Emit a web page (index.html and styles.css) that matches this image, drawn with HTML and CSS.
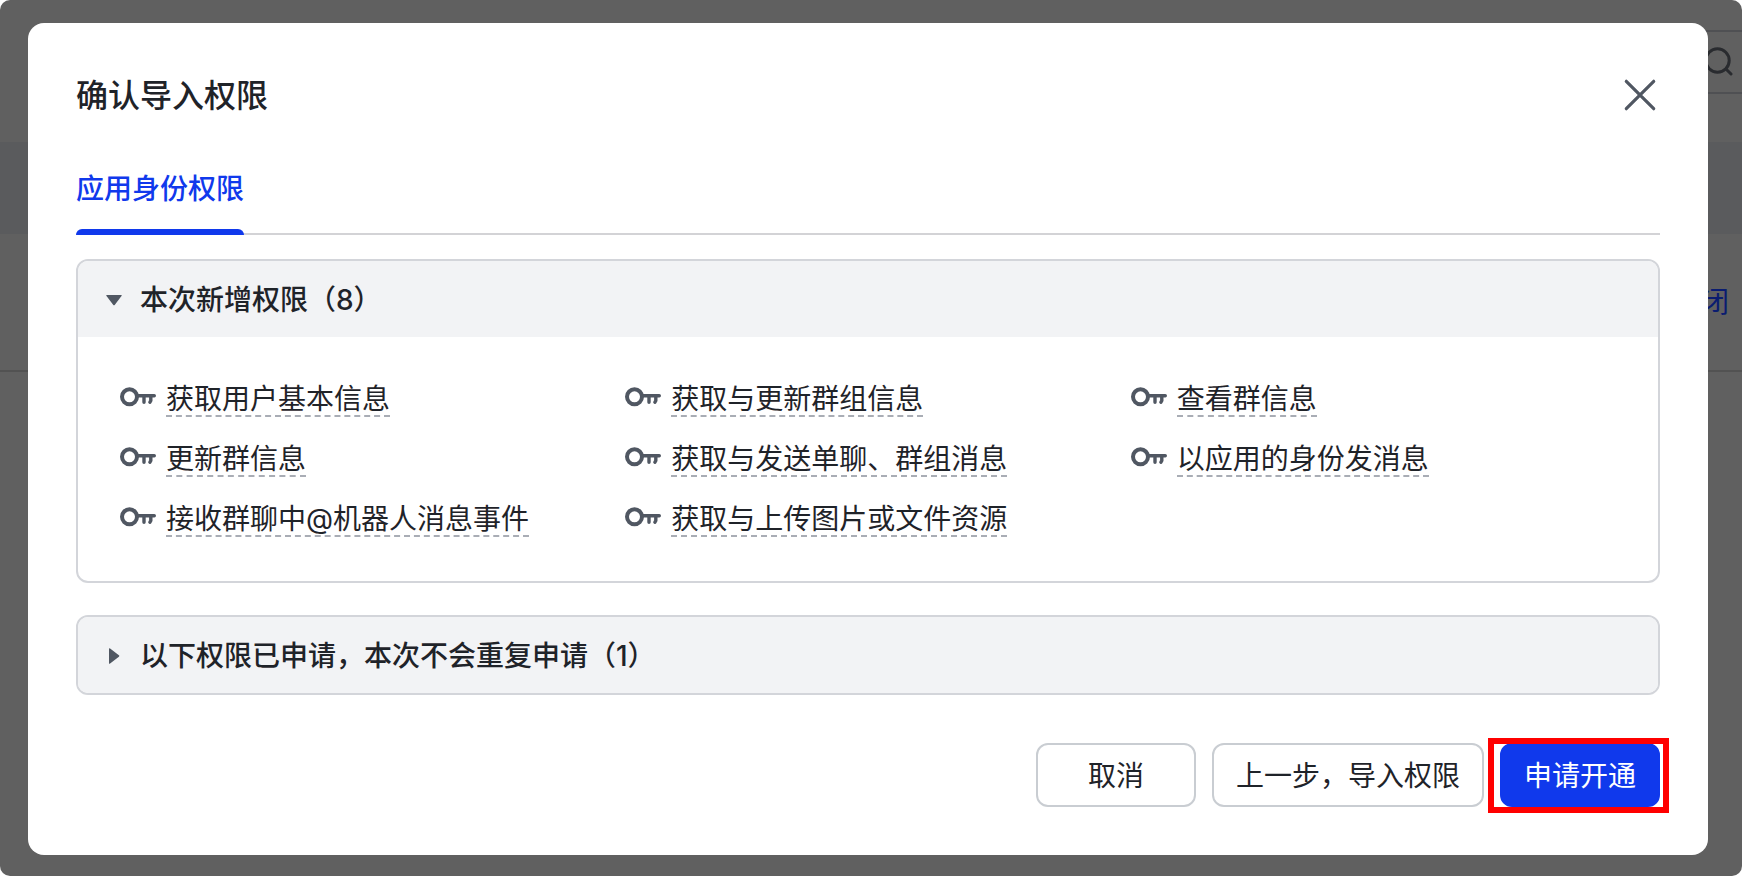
FILE: index.html
```html
<!DOCTYPE html>
<html lang="zh-CN">
<head>
  <meta charset="UTF-8">
  <title>确认导入权限</title>
  <link rel="stylesheet" href="styles.css">
</head>
<body>

<svg width="0" height="0" class="sprite" aria-hidden="true">
  <symbol id="key" viewBox="0 0 36 20">
    <circle cx="9.5" cy="9.8" r="7.5" fill="none" stroke="currentColor" stroke-width="4"/>
    <path d="M18 8.8H34.3M24 9v6.3M30.8 9v4.5l-.9 1.8" fill="none" stroke="currentColor" stroke-width="3.4" stroke-linecap="round"/>
  </symbol>
</svg>

<div class="screen">
  <!-- page behind the dialog -->
  <div class="page">
    <div class="toolbar">
      <div class="search">
        <svg width="28" height="30" viewBox="0 0 28 30" fill="none" stroke="#292b2f" stroke-width="3" stroke-linecap="round">
          <circle cx="12.5" cy="13.5" r="11.7"/>
          <path d="M21 22l5 5"/>
        </svg>
      </div>
    </div>
    <div class="table-head"></div>
    <div class="table-row"><a href="#" class="row-link">关闭</a></div>
  </div>

  <div class="modal" role="dialog" aria-labelledby="modalTitle">
    <div class="modal-header">
      <h1 id="modalTitle">确认导入权限</h1>
      <button type="button" class="close" aria-label="关闭">
        <svg width="32" height="32" viewBox="0 0 32 32" fill="none" stroke="currentColor" stroke-width="3.2" stroke-linecap="round">
          <path d="M2.3 2.3l27.4 27.4M29.7 2.3L2.3 29.7"/>
        </svg>
      </button>
    </div>

    <div class="tabs">
      <button type="button" class="tab active">应用身份权限</button>
    </div>

    <div class="panel">
      <button type="button" class="panel-header" aria-expanded="true">
        <svg class="arrow" width="16" height="16" viewBox="0 0 16 16"><path d="M.8 3h14.4q1 .2.3 1.1L8.7 12.9q-.7.8-1.4 0L.5 4.1Q-.2 3.2.8 3z"/></svg>
        <span>本次新增权限（8）</span>
      </button>
      <ul class="scopes">
        <li><svg class="key"><use href="#key"/></svg><span>获取用户基本信息</span></li>
        <li><svg class="key"><use href="#key"/></svg><span>获取与更新群组信息</span></li>
        <li><svg class="key"><use href="#key"/></svg><span>查看群信息</span></li>
        <li><svg class="key"><use href="#key"/></svg><span>更新群信息</span></li>
        <li><svg class="key"><use href="#key"/></svg><span>获取与发送单聊、群组消息</span></li>
        <li><svg class="key"><use href="#key"/></svg><span>以应用的身份发消息</span></li>
        <li><svg class="key"><use href="#key"/></svg><span>接收群聊中@机器人消息事件</span></li>
        <li><svg class="key"><use href="#key"/></svg><span>获取与上传图片或文件资源</span></li>
      </ul>
    </div>

    <div class="panel">
      <button type="button" class="panel-header" aria-expanded="false">
        <svg class="arrow" width="16" height="16" viewBox="0 0 16 16"><path d="M3 .8q.2-1 1.1-.3l8.8 6.8q.8.7 0 1.4l-8.8 6.8q-.9.7-1.1-.3z"/></svg>
        <span>以下权限已申请，本次不会重复申请（1）</span>
      </button>
    </div>

    <div class="modal-footer">
      <button type="button" class="btn">取消</button>
      <button type="button" class="btn">上一步，导入权限</button>
      <button type="button" class="btn btn-primary">申请开通</button>
    </div>
  </div>
</div>

</body>
</html>
```

FILE: styles.css
```css
* {
  box-sizing: border-box;
}
body {
  margin: 0;
  background: #fff;
  color: #1f2329;
  font-family: Inter, "Noto Sans CJK SC", sans-serif;
  font-size: 28px;
  line-height: 40px;
}
button {
  font: inherit;
  color: inherit;
  cursor: pointer;
}
.sprite {
  position: absolute;
}
.screen {
  position: relative;
  min-height: 100vh;
  padding: 23px 34px 21px 28px;
  border-radius: 10px;
  background: #606060;
  overflow: hidden;
}

/* background page */
.page {
  position: absolute;
  top: 0;
  left: 0;
  right: 0;
}
.toolbar {
  display: flex;
  justify-content: flex-end;
  height: 142px;
  padding-top: 30px;
}
.search {
  display: flex;
  justify-content: flex-end;
  width: 400px;
  height: 64px;
  padding: 15px 9px 0 0;
  border-top: 2px solid #4f5053;
  border-bottom: 2px solid #4f5053;
}
.table-head {
  height: 92px;
  background: #5a5b5d;
}
.table-row {
  height: 138px;
  padding: 48px 13px 0 0;
  border-bottom: 2px solid #525252;
  text-align: right;
}
.row-link {
  color: #0a1c70;
  text-decoration: none;
}

/* dialog */
.modal {
  position: relative;
  min-height: calc(100vh - 44px);
  padding: 48px;
  border-radius: 16px;
  background: #fff;
}
.modal-header {
  display: flex;
  align-items: center;
  justify-content: space-between;
  height: 48px;
}
h1 {
  margin: 0;
  padding-top: 2px;
  font-size: 32px;
  line-height: 48px;
  font-weight: 500;
}
.close {
  display: flex;
  padding: 4px;
  border: none;
  background: none;
  color: #505762;
}
.tabs {
  display: flex;
  height: 84px;
  margin-top: 32px;
  box-shadow: inset 0 -2px #d3d3d6;
}
.tab {
  position: relative;
  padding: 18px 0 26px;
  border: none;
  background: none;
  color: #1039ec;
  font-weight: 500;
}
.tab.active::after {
  content: "";
  position: absolute;
  left: 0;
  right: 0;
  bottom: 0;
  height: 6px;
  border-radius: 6px 6px 0 0;
  background: #1039ec;
}
.panel {
  border: 2px solid #d3d5da;
  border-radius: 12px;
  overflow: hidden;
  margin-top: 24px;
}
.panel + .panel {
  margin-top: 32px;
}
.panel-header {
  display: flex;
  align-items: center;
  gap: 18px;
  width: 100%;
  height: 76px;
  padding: 2px 28px 0;
  border: none;
  background: #f2f3f5;
  font-weight: 500;
}
.arrow {
  fill: #505762;
}
.scopes {
  display: grid;
  grid-template-columns: repeat(3, 1fr);
  row-gap: 20px;
  margin: 0;
  padding: 40px 22px 44px 42px;
  list-style: none;
}
.scopes li {
  display: flex;
  align-items: center;
  gap: 10px;
  height: 40px;
}
.scopes span {
  height: 40px;
  border-bottom: 2px dashed #a9adb5;
  line-height: 44px;
  white-space: nowrap;
}
.key {
  width: 36px;
  height: 20px;
  color: #505762;
}
.modal-footer {
  display: flex;
  justify-content: flex-end;
  gap: 16px;
  margin-top: 48px;
}
.btn {
  min-width: 160px;
  height: 64px;
  padding: 2px 22px 0;
  border: 2px solid #c9cdd2;
  border-radius: 12px;
  background: #fff;
}
.btn-primary {
  position: relative;
  border-color: #1039ec;
  background: #1039ec;
  color: #fff;
}
/* red frame around the button to press */
.btn-primary::after {
  content: "";
  position: absolute;
  top: -7px;
  right: -11px;
  bottom: -8px;
  left: -14px;
  border: 6px solid #f00;
}
```
